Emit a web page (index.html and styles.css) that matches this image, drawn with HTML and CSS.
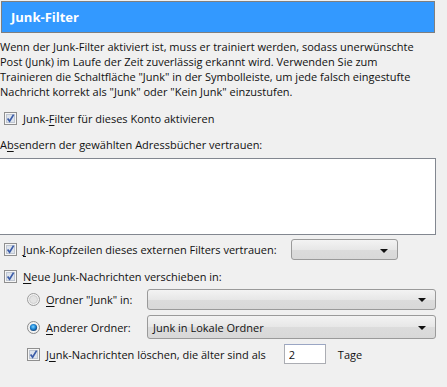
FILE: index.html
```html
<!DOCTYPE html>
<html lang="de">
<head>
    <meta charset="UTF-8">
    <title>Junk-Filter</title>
    <link rel="stylesheet" href="styles.css">
</head>
<body>
    <div class="pane">
        <div class="header">Junk-Filter</div>

        <p class="intro">Wenn der Junk-Filter aktiviert ist, muss er trainiert werden, sodass unerwünschte<br>Post (Junk) im Laufe der Zeit zuverlässig erkannt wird. Verwenden Sie zum<br>Trainieren die Schaltfläche "Junk" in der Symbolleiste, um jede falsch eingestufte<br>Nachricht korrekt als "Junk" oder "Kein Junk" einzustufen.</p>

        <label class="row row-enable">
            <svg class="check" width="13" height="13" viewBox="0 0 13 13"><rect x=".5" y=".5" width="12" height="12" fill="#f6f6f6" stroke="#8f8f8f"/><rect x="2.5" y="2.5" width="8" height="8" fill="#dde3ec" stroke="#bfc6d1"/><path d="M3.6 6.4 L5.6 9.2 L9.6 2.6" stroke="#3b5ca8" stroke-width="1.7" fill="none"/></svg>
            <span>Junk-<u>F</u>ilter für dieses Konto aktivieren</span>
        </label>

        <div class="list-label">A<u>b</u>sendern der gewählten Adressbücher vertrauen:</div>
        <div class="listbox"></div>

        <div class="row row-headers">
            <label class="opt">
                <svg class="check" width="13" height="13" viewBox="0 0 13 13"><rect x=".5" y=".5" width="12" height="12" fill="#f6f6f6" stroke="#8f8f8f"/><rect x="2.5" y="2.5" width="8" height="8" fill="#dde3ec" stroke="#bfc6d1"/><path d="M3.6 6.4 L5.6 9.2 L9.6 2.6" stroke="#3b5ca8" stroke-width="1.7" fill="none"/></svg>
                <span><u>J</u>unk-Kopfzeilen dieses externen Filters vertrauen:</span>
            </label>
            <div class="select select-small"><span class="value"></span><span class="arrow"></span></div>
        </div>

        <label class="row row-move">
            <svg class="check" width="13" height="13" viewBox="0 0 13 13"><rect x=".5" y=".5" width="12" height="12" fill="#f6f6f6" stroke="#8f8f8f"/><rect x="2.5" y="2.5" width="8" height="8" fill="#dde3ec" stroke="#bfc6d1"/><path d="M3.6 6.4 L5.6 9.2 L9.6 2.6" stroke="#3b5ca8" stroke-width="1.7" fill="none"/></svg>
            <span><u>N</u>eue Junk-Nachrichten verschieben in:</span>
        </label>

        <div class="indent">
            <div class="row row-junkfolder">
                <label class="opt opt-radio">
                    <svg class="radio" width="13" height="13" viewBox="0 0 13 13"><circle cx="6.5" cy="6.5" r="6" fill="#f2f2f2" stroke="#9a9a9a"/><circle cx="6.5" cy="6.5" r="4" fill="#e3e3e3" stroke="#cfcfcf"/></svg>
                    <span><u>O</u>rdner "Junk" in:</span>
                </label>
                <div class="select select-wide"><span class="value"></span><span class="arrow"></span></div>
            </div>

            <div class="row row-other">
                <label class="opt opt-radio">
                    <svg class="radio" width="13" height="13" viewBox="0 0 13 13"><defs><radialGradient id="dot" cx="45%" cy="40%" r="60%"><stop offset="0" stop-color="#7fd3ff"/><stop offset=".55" stop-color="#1c86d6"/><stop offset="1" stop-color="#123f73"/></radialGradient></defs><circle cx="6.5" cy="6.5" r="6" fill="#f2f2f2" stroke="#8a8a8a"/><circle cx="6.5" cy="6.5" r="3.6" fill="url(#dot)"/></svg>
                    <span><u>A</u>nderer Ordner:</span>
                </label>
                <div class="select select-wide select-tall"><span class="value">Junk in Lokale Ordner</span><span class="arrow"></span></div>
            </div>

            <div class="row row-purge">
                <label class="opt">
                    <svg class="check" width="13" height="13" viewBox="0 0 13 13"><rect x=".5" y=".5" width="12" height="12" fill="#f6f6f6" stroke="#8f8f8f"/><rect x="2.5" y="2.5" width="8" height="8" fill="#dde3ec" stroke="#bfc6d1"/><path d="M3.6 6.4 L5.6 9.2 L9.6 2.6" stroke="#3b5ca8" stroke-width="1.7" fill="none"/></svg>
                    <span>J<u>u</u>nk-Nachrichten löschen, die älter sind als</span>
                </label>
                <input class="days" type="text" value="2">
                <span class="unit">Tage</span>
            </div>
        </div>
    </div>
</body>
</html>
```

FILE: styles.css
```css
body {
    margin: 0;
    background-color: #f0f0f0;
    font-family: "Open Sans", "Noto Sans", sans-serif;
    font-size: 11px;
    color: #111;
}

.pane {
    width: 436px;
}

.header {
    margin: 1px 0 0 1px;
    width: 423px;
    height: 30px;
    line-height: 30px;
    padding-left: 9px;
    border: 1px solid #7f7f7f;
    background-color: #3399ff;
    color: #fff;
    font-weight: bold;
    font-size: 13px;
}

.intro {
    margin: 6px 0 0 0;
    line-height: 15px;
    white-space: nowrap;
}

u {
    text-decoration: underline;
    text-underline-offset: 2px;
}

.row {
    display: flex;
    align-items: center;
}

.opt {
    display: flex;
    align-items: center;
}

.check, .radio {
    flex: none;
    margin-right: 6px;
}

.row-enable {
    margin: 11px 0 0 4px;
    height: 16px;
}

.list-label {
    margin-top: 11px;
    height: 16px;
    line-height: 16px;
}

.listbox {
    margin: 5px 0 0 -1px;
    width: 435px;
    height: 75px;
    border: 1px solid #828790;
    background-color: #fff;
}

.row-headers {
    margin: 4px 0 0 4px;
    height: 21px;
}

.select {
    display: flex;
    align-items: center;
    box-sizing: border-box;
    height: 21px;
    border: 1px solid #9a9a9a;
    border-radius: 3px;
    background: linear-gradient(#f3f3f3, #e7e7e7 50%, #dcdcdc 51%, #d8d8d8);
    padding: 0 9px 0 5px;
}

.select .value {
    flex: 1;
    font-size: 11px;
}

.select .arrow {
    width: 0;
    height: 0;
    border-left: 4px solid transparent;
    border-right: 4px solid transparent;
    border-top: 4px solid #111;
    margin-top: 2px;
}

.select-small {
    margin-left: 14px;
    width: 107px;
}

.row-move {
    margin: 8px 0 0 4px;
    height: 16px;
}

.indent {
    padding-left: 27px;
}

.opt-radio {
    width: 120px;
}

.row-junkfolder {
    margin-top: 4px;
    height: 22px;
}

.select-wide {
    width: 289px;
}

.row-other {
    margin-top: 5px;
    height: 24px;
}

.select-tall {
    height: 24px;
}

.row-purge {
    margin-top: 5px;
    height: 20px;
}

.days {
    box-sizing: border-box;
    margin-left: 18px;
    width: 42px;
    height: 20px;
    border: 1px solid #abadb3;
    border-top-color: #9aa6c4;
    padding: 0 4px;
    font-family: inherit;
    font-size: 11px;
    color: #111;
    background-color: #fff;
}

.unit {
    margin-left: 12px;
}
```
